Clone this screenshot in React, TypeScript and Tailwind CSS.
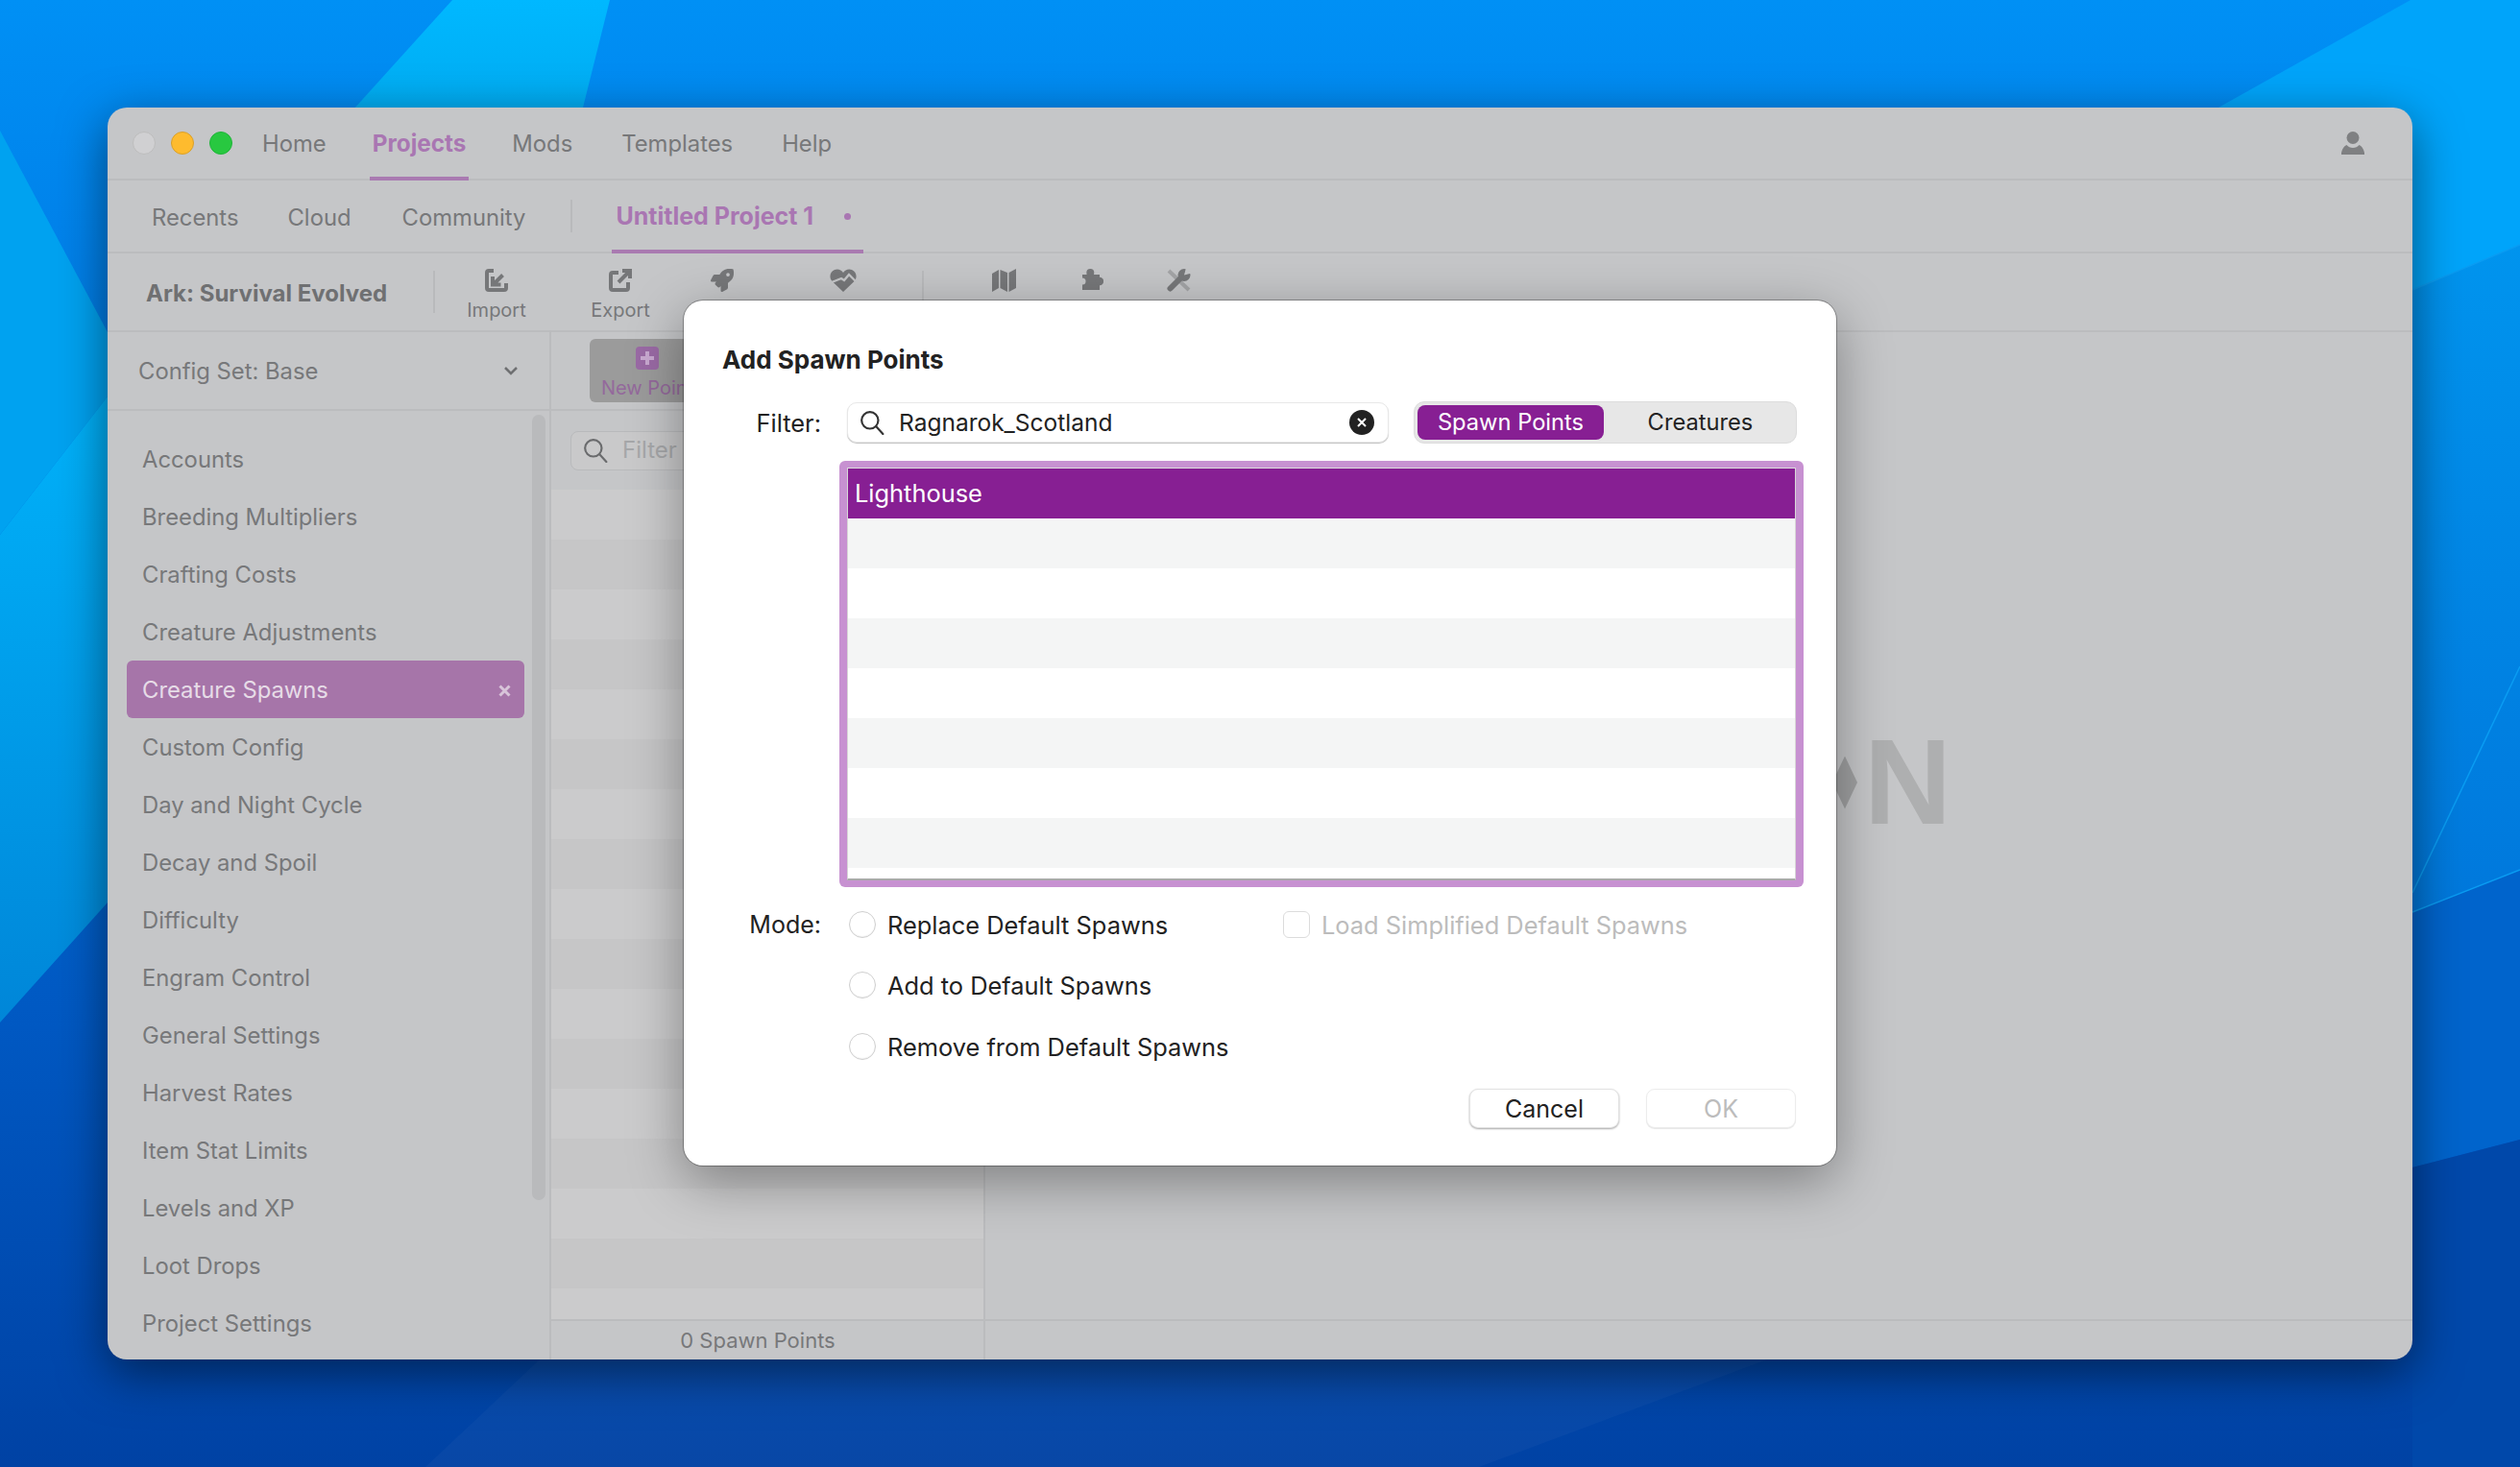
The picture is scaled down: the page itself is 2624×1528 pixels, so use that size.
import React from "react";
import { FaRocket } from "react-icons/fa";

const sidebarItems = [
  "Accounts",
  "Breeding Multipliers",
  "Crafting Costs",
  "Creature Adjustments",
  "Creature Spawns",
  "Custom Config",
  "Day and Night Cycle",
  "Decay and Spoil",
  "Difficulty",
  "Engram Control",
  "General Settings",
  "Harvest Rates",
  "Item Stat Limits",
  "Levels and XP",
  "Loot Drops",
  "Project Settings",
];

function Wallpaper() {
  return (
    <svg className="absolute inset-0 h-full w-full" viewBox="0 0 2624 1528" preserveAspectRatio="none">
      <defs>
        <linearGradient id="base" x1="0" y1="0" x2="0" y2="1">
          <stop offset="0" stopColor="#0090f5" />
          <stop offset="0.2" stopColor="#007fe8" />
          <stop offset="0.7" stopColor="#0058c2" />
          <stop offset="1" stopColor="#0042a4" />
        </linearGradient>
        <linearGradient id="top" x1="0" y1="0" x2="0" y2="1">
          <stop offset="0" stopColor="#00b8ff" />
          <stop offset="1" stopColor="#0098dc" />
        </linearGradient>
        <linearGradient id="left" x1="0" y1="0" x2="0" y2="1">
          <stop offset="0" stopColor="#00b2fa" />
          <stop offset="1" stopColor="#0086d8" />
        </linearGradient>
        <linearGradient id="right" x1="0" y1="0" x2="0" y2="1">
          <stop offset="0" stopColor="#0094ee" />
          <stop offset="1" stopColor="#0078dc" />
        </linearGradient>
      </defs>
      <rect width="2624" height="1528" fill="url(#base)" />
      <polygon points="471,0 635,0 560,300 200,300" fill="url(#top)" />
      <polygon points="0,136 112,346 112,413 0,557" fill="#00a2f0" />
      <polygon points="0,557 112,413 112,940 0,1065" fill="url(#left)" />
      <polygon points="2510,0 2624,0 2624,255 2512,302 2310,112" fill="#00a4fa" />
      <polygon points="2512,302 2624,255 2624,906 2512,950" fill="url(#right)" />
      <polygon points="2512,950 2624,906 2624,1187 2512,1216" fill="#0064cc" />
      <polygon points="2512,1216 2624,1187 2624,1528 2512,1528" fill="#0048aa" />
      <polygon points="562,1416 443,1528 1540,1528 1840,1416" fill="#ffffff" fillOpacity="0.03" />
      <path d="M2512 930L2624 694M2512 950L2624 906M2512 302L2624 255" stroke="#0a9cf2" strokeWidth="1.5" fill="none" />
    </svg>
  );
}

function ImportIcon() {
  return (
    <svg width="24" height="24" viewBox="0 0 24 24" fill="none" stroke="#767779" strokeWidth="4">
      <path d="M9 2H4a2 2 0 0 0-2 2v16a2 2 0 0 0 2 2h16a2 2 0 0 0 2-2v-5" />
      <path d="M18.500 6.500l-8.500 8.500M8 8v8.500h8.500" />
    </svg>
  );
}

function ExportIcon() {
  return (
    <svg width="24" height="24" viewBox="0 0 24 24" fill="none" stroke="#767779" strokeWidth="4">
      <path d="M10 4H4a2 2 0 0 0-2 2v14a2 2 0 0 0 2 2h14a2 2 0 0 0 2-2v-6" />
      <path d="M10 14L21 3M14 2h8v8" />
    </svg>
  );
}

function HeartIcon() {
  return (
    <svg width="28" height="24" viewBox="0 0 28 24">
      <path
        d="M14 24L2.500 13C-1 9.500 0 3 5 1c3.500-1.500 7 0 9 3 2-3 5.500-4.500 9-3 5 2 6 8.500 2.500 12z"
        fill="#767779"
      />
      <path d="M2 14l10-4 3 2 5-6 7 7" fill="none" stroke="#c5c6c8" strokeWidth="2.400" />
    </svg>
  );
}

function MapIcon() {
  return (
    <svg width="25" height="24" viewBox="0 0 25 24" fill="#767779">
      <polygon points="0,5 7,1 7,20 0,24" />
      <polygon points="8.500,1 16,4 16,24 8.500,20" />
      <polygon points="17.500,4 25,0 25,20 17.500,24" />
    </svg>
  );
}

function PuzzleIcon() {
  return (
    <svg width="22" height="22" viewBox="0 0 22 22" fill="#767779">
      <rect x="0" y="6" width="18" height="16" />
      <circle cx="8.300" cy="4" r="4" />
      <circle cx="18" cy="13" r="4.200" />
      <circle cx="0" cy="13" r="3.500" fill="#c5c6c8" />
    </svg>
  );
}

function ToolsIcon() {
  return (
    <svg width="25" height="24" viewBox="0 0 25 24">
      <path d="M2 2l21 20" stroke="#a3a4a6" strokeWidth="4" />
      <path d="M3.500 20.500L15 9" stroke="#767779" strokeWidth="6" strokeLinecap="round" />
      <circle cx="18" cy="6.500" r="6.500" fill="#767779" />
      <polygon points="18,6.500 20,-1 26,-1 26,4.500" fill="#c5c6c8" />
    </svg>
  );
}

function UserIcon() {
  return (
    <svg width="24" height="24" viewBox="0 0 24 24" fill="#7f8082">
      <ellipse cx="12" cy="6.500" rx="6.500" ry="6.500" />
      <path d="M0 24v-2c1-4.500 3-7 5.500-8 1.500 2 4 3 6.500 3s5-1 6.500-3c2.500 1 4.500 3.500 5.500 8v2z" />
    </svg>
  );
}

function SearchIcon({ color, size }: { color: string; size: number }) {
  return (
    <svg width={size} height={size} viewBox="0 0 24 24" fill="none" stroke={color} strokeWidth="2">
      <circle cx="10" cy="10" r="8" />
      <path d="M16 16l6.500 7" strokeLinecap="round" />
    </svg>
  );
}

function Radio({ label }: { label: string }) {
  return (
    <div className="flex items-center gap-[12px]">
      <span className="h-[28px] w-[28px] rounded-full border border-[#cfcfcf] bg-white shadow-[inset_0_-1px_1px_rgba(0,0,0,0.06)]" />
      <span className="pt-[1px] text-[25.4px]">{label}</span>
    </div>
  );
}

function Dialog() {
  return (
    <div className="absolute left-[600px] top-[201px] h-[901px] w-[1200px] rounded-[20px] bg-white pt-[44px] text-[25px] leading-[36px] text-[#222222] shadow-[0_0_0_1px_rgba(0,0,0,0.28),0_16px_56px_rgba(0,0,0,0.36)]">
      <div className="pl-[40px] text-[26px] font-bold">Add Spawn Points</div>

      <div className="mt-[25px] flex items-center">
        <div className="w-[143px] pt-[1px] text-right text-[25.4px]">Filter:</div>
        <div className="ml-[27px] flex h-[42px] w-[564px] items-center rounded-[10px] border border-[#e8e8e8] bg-white pl-[12px] pr-[14px] shadow-[0_1px_1px_rgba(0,0,0,0.25)]">
          <SearchIcon color="#333333" size={26} />
          <span className="ml-[15px] flex-1 text-[24.500px]">Ragnarok_Scotland</span>
          <span className="flex h-[26px] w-[26px] items-center justify-center rounded-full bg-[#222222]">
            <svg width="10" height="10" viewBox="0 0 10 10" stroke="#ffffff" strokeWidth="2">
              <path d="M1 1l8 8M9 1l-8 8" />
            </svg>
          </span>
        </div>
        <div className="ml-[26px] flex h-[44px] w-[399px] items-center rounded-[11px] border border-[#dcdcdc] bg-[#e7e7e7] p-[3px] text-[23.7px]">
          <div className="flex h-[36px] w-[194px] items-center justify-center rounded-[8px] bg-[#871f93] text-white">Spawn Points</div>
          <div className="flex-1 pl-[4px] text-center">Creatures</div>
        </div>
      </div>

      <div className="ml-[162px] mt-[18px] h-[444px] w-[1004px] rounded-[6px] bg-[#c791d1] p-[7px] pl-[8px] pr-[8px]">
        <div className="h-full overflow-hidden border-x border-t border-b-2 border-x-[#d6d6d6] border-t-[#dddddd] border-b-[#aaaaaa] bg-white">
          <div className="flex h-[52px] items-center bg-[#871f93] pl-[7px] text-[25.4px] text-white">Lighthouse</div>
          <div className="h-[52px] bg-[#f4f5f5]" />
          <div className="h-[52px]" />
          <div className="h-[52px] bg-[#f4f5f5]" />
          <div className="h-[52px]" />
          <div className="h-[52px] bg-[#f4f5f5]" />
          <div className="h-[52px]" />
          <div className="h-[52px] bg-[#f4f5f5]" />
        </div>
      </div>

      <div className="mt-[21px] flex h-[36px] items-center">
        <div className="w-[143px] text-right">Mode:</div>
        <div className="ml-[29px] w-[452px]">
          <Radio label="Replace Default Spawns" />
        </div>
        <div className="flex items-center gap-[12px] text-[#bcbcbc]">
          <span className="h-[28px] w-[28px] rounded-[6px] border border-[#dcdcdc] bg-white" />
          <span className="pt-[1px] text-[25.4px]">Load Simplified Default Spawns</span>
        </div>
      </div>
      <div className="ml-[172px] mt-[27px] flex h-[36px] items-center">
        <Radio label="Add to Default Spawns" />
      </div>
      <div className="ml-[172px] mt-[28px] flex h-[36px] items-center">
        <Radio label="Remove from Default Spawns" />
      </div>

      <div className="mt-[26px] flex justify-end gap-[28px] pr-[42px]">
        <div className="flex h-[41px] w-[156px] items-center justify-center rounded-[9px] border border-[#e2e2e2] bg-white shadow-[0_1px_2px_rgba(0,0,0,0.35)]">Cancel</div>
        <div className="flex h-[41px] w-[156px] items-center justify-center rounded-[9px] border border-[#ececec] bg-white text-[#bcbcbc] shadow-[0_1px_1px_rgba(0,0,0,0.1)]">OK</div>
      </div>
    </div>
  );
}

export default function App() {
  return (
    <div className="relative h-[1528px] w-[2624px] overflow-hidden p-[112px] font-['Inter',sans-serif] text-[23.8px] text-[#77787a]">
      <Wallpaper />
      <div className="relative flex h-[1304px] w-[2400px] flex-col overflow-hidden rounded-[20px] bg-[#c5c6c8] shadow-[0_14px_50px_rgba(0,0,0,0.5)]">
        {/* top menu */}
        <div className="flex h-[76px] shrink-0 items-stretch border-b-2 border-[#bbbcbe] pl-[26px] pr-[50px]">
          <div className="flex items-center gap-[16px]">
            <span className="h-[24px] w-[24px] rounded-full border border-[#bdbdbd] bg-[#d0d0d2]" />
            <span className="h-[24px] w-[24px] rounded-full border border-[#d9a02a] bg-[#febb2e]" />
            <span className="h-[24px] w-[24px] rounded-full border border-[#20b53a] bg-[#28c840]" />
          </div>
          <div className="ml-[31px] flex items-center pt-[2px]">Home</div>
          <div className="-mb-[2px] ml-[45px] flex items-center border-b-4 border-[#a97ab1] px-[3px] pt-[2px] text-[24.3px] font-bold text-[#a976b2]">Projects</div>
          <div className="ml-[45px] flex items-center pt-[2px]">Mods</div>
          <div className="ml-[51px] flex items-center pt-[2px]">Templates</div>
          <div className="ml-[51px] flex items-center pt-[2px]">Help</div>
          <div className="ml-auto flex items-center">
            <UserIcon />
          </div>
        </div>

        {/* project tabs */}
        <div className="flex h-[76px] shrink-0 items-stretch border-b-2 border-[#bbbcbe] pl-[46px]">
          <div className="flex items-center pt-[3px]">Recents</div>
          <div className="ml-[51px] flex items-center pt-[3px]">Cloud</div>
          <div className="ml-[53px] flex items-center pt-[3px]">Community</div>
          <div className="my-[20px] ml-[47px] w-[2px] bg-[#b9babc]" />
          <div className="-mb-[2px] ml-[41px] flex w-[262px] items-center border-b-4 border-[#a97ab1] pl-[4px] pt-[3px] text-[25px] font-bold text-[#a976b2]">
            Untitled Project 1
            <span className="ml-[32px] h-[7px] w-[7px] rounded-full bg-[#a976b2]" />
          </div>
        </div>

        {/* toolbar */}
        <div className="flex h-[82px] shrink-0 items-center border-b-2 border-[#bbbcbe] pl-[40px] text-[20px]">
          <div className="w-[299px] pt-[3px] text-[24px] font-bold text-[#6f7072]">Ark: Survival Evolved</div>
          <div className="h-[44px] w-[2px] bg-[#b9babc]" />
          <div className="flex h-full items-start pt-[16px]">
            <div className="flex w-[128px] flex-col items-center gap-[4px]">
              <ImportIcon />
              <span>Import</span>
            </div>
            <div className="flex w-[130px] flex-col items-center gap-[4px]">
              <ExportIcon />
              <span>Export</span>
            </div>
            <div className="flex w-[82px] justify-center">
              <FaRocket size={24} color="#767779" />
            </div>
            <div className="flex w-[170px] justify-center">
              <HeartIcon />
            </div>
          </div>
          <div className="-ml-[3px] h-[44px] w-[2px] bg-[#b9babc]" />
          <div className="flex h-full items-start pt-[16px]">
            <div className="ml-[71px] flex w-[25px] justify-center">
              <MapIcon />
            </div>
            <div className="ml-[67px] flex w-[25px] justify-center">
              <PuzzleIcon />
            </div>
            <div className="ml-[65px] flex w-[25px] justify-center">
              <ToolsIcon />
            </div>
          </div>
        </div>

        {/* body */}
        <div className="flex min-h-0 flex-1">
          <aside className="relative w-[462px] shrink-0 overflow-hidden border-r-2 border-[#bbbcbe]">
            <div className="flex h-[82px] items-center justify-between border-b-2 border-[#bbbcbe] pl-[32px] pr-[32px]">
              <span className="pt-[1px]">Config Set: Base</span>
              <svg width="16" height="10" viewBox="0 0 16 10" fill="none" stroke="#6f7072" strokeWidth="2.500">
                <path d="M2 2l6 6 6-6" />
              </svg>
            </div>
            <div className="px-[20px] pt-[20px]">
              {sidebarItems.map((item) =>
                item === "Creature Spawns" ? (
                  <div key={item} className="flex h-[60px] w-[414px] items-center justify-between rounded-[6px] bg-[#a675a9] pl-[16px] pr-[14px] pt-[2px] text-[#e6dce7]">
                    {item}
                    <svg width="13" height="13" viewBox="0 0 13 13" stroke="#d8c4d9" strokeWidth="3">
                      <path d="M1.500 1.500l10 10M11.500 1.500l-10 10" />
                    </svg>
                  </div>
                ) : (
                  <div key={item} className="flex h-[60px] items-center pl-[16px] pt-[2px]">
                    {item}
                  </div>
                ),
              )}
            </div>
            <div className="absolute right-[4px] top-[86px] h-[818px] w-[14px] rounded-full bg-[#b9babc]" />
          </aside>

          <section className="flex w-[452px] shrink-0 flex-col border-r-2 border-[#bbbcbe]">
            <div className="flex h-[82px] items-center border-b-2 border-[#bbbcbe] pl-[40px]">
              <div className="flex h-[66px] w-[120px] flex-col items-center rounded-[6px] bg-[#9b9b9b] pt-[8px] text-[20px] leading-[24px] text-[#94699c]">
                <span className="flex h-[24px] w-[24px] items-center justify-center rounded-[4px] bg-[#9a6aa5]">
                  <svg width="16" height="16" viewBox="0 0 16 16" stroke="#c8a8d0" strokeWidth="4">
                    <path d="M8 1v14M1 8h14" />
                  </svg>
                </span>
                <span className="mt-[7px]">New Point</span>
              </div>
            </div>
            <div className="flex h-[82px] shrink-0 items-center pl-[20px] pr-[20px]">
              <div className="flex h-[41px] w-full items-center rounded-[8px] border border-[#b9babc] bg-[#c9c9ca] pl-[12px] text-[24px] text-[#a6a7a9]">
                <SearchIcon color="#6a6b6d" size={26} />
                <span className="ml-[15px]">Filter</span>
              </div>
            </div>
            <div className="min-h-0 flex-1 overflow-hidden">
              {Array.from({ length: 17 }, (_, i) => (
                <div key={i} className={i % 2 === 0 ? "h-[52px] bg-[#cbcbcc]" : "h-[52px] bg-[#c6c6c7]"} />
              ))}
            </div>
            <div className="flex h-[42px] shrink-0 items-center justify-center border-t-2 border-[#bbbcbe] pr-[20px] text-[22px]">0 Spawn Points</div>
          </section>

          <section className="flex min-w-0 flex-1 flex-col">
            <div className="flex min-h-0 flex-1 items-center justify-end pb-[90px] pr-[480px] font-['Liberation_Sans',sans-serif] text-[126px] font-bold leading-none text-[#aeafb0]">
              <span className="h-[55px] w-[26px] bg-[#a0a1a2] [clip-path:polygon(50%_0,100%_50%,50%_100%,0_50%)]" />
              <span className="ml-[7px]">N</span>
            </div>
            <div className="h-[42px] shrink-0 border-t-2 border-[#bbbcbe]" />
          </section>
        </div>

        <Dialog />
      </div>
    </div>
  );
}
